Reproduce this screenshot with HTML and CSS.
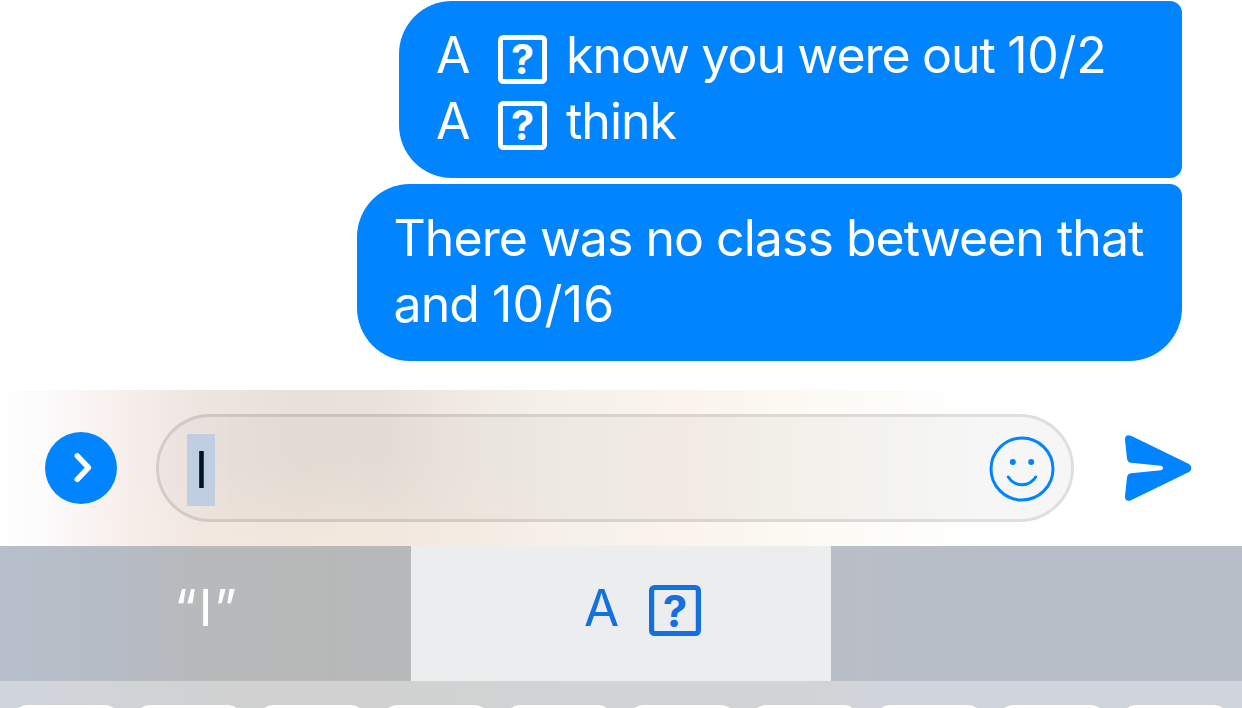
FILE: index.html
```
<!DOCTYPE html>
<html lang="en">
<head>
  <meta charset="UTF-8">
  <title>Messages</title>
  <link rel="stylesheet" href="styles.css">
</head>
<body>
  <div class="chat">
    <div class="bubble bubble-first">
      <div class="line">
        <span class="letter">A</span>
        <svg class="missing" viewBox="0 0 52 52">
          <rect x="2.6" y="2.6" width="46.8" height="46.8" rx="3" fill="none" stroke="currentColor" stroke-width="5.2"/>
          <text x="26" y="41.5" text-anchor="middle" class="missing-mark">?</text>
        </svg>
        <span class="know">know you were out <span class="date">10/2</span></span>
      </div>
      <div class="line">
        <span class="letter">A</span>
        <svg class="missing" viewBox="0 0 52 52">
          <rect x="2.6" y="2.6" width="46.8" height="46.8" rx="3" fill="none" stroke="currentColor" stroke-width="5.2"/>
          <text x="26" y="41.5" text-anchor="middle" class="missing-mark">?</text>
        </svg>
        <span class="know">think</span>
      </div>
    </div>
    <div class="bubble bubble-last">
      <div class="line"><span class="there">There was no class between that</span></div>
      <div class="line"><span class="there">and <span class="date-last">10/16</span></span></div>
    </div>
  </div>

  <div class="composer">
    <button class="more" aria-label="More">
      <svg width="72" height="72" viewBox="0 0 72 72">
        <path d="M32.3 23.8 L43.5 35.7 L32.3 47.3" fill="none" stroke="#fff" stroke-width="5.5" stroke-linecap="round" stroke-linejoin="round"/>
      </svg>
    </button>
    <div class="field">
      <span class="selected">I</span>
      <svg class="smiley" width="66" height="66" viewBox="0 0 66 66" fill="none" stroke="#0084ff" stroke-width="3">
        <circle cx="33" cy="33" r="31"/>
        <circle cx="23.8" cy="26" r="3" fill="#0084ff" stroke="none"/>
        <circle cx="42.2" cy="26" r="3" fill="#0084ff" stroke="none"/>
        <path d="M19.3 41 C26 51.3 40 51.3 46.7 41" stroke-linecap="round"/>
      </svg>
    </div>
    <button class="send" aria-label="Send">
      <svg width="68" height="68" viewBox="0 0 68 68">
        <path fill="#0084ff" d="M1 6 C0.6 2 3.5 0 7 1.8 L64 29.4 Q67.3 31 67.3 34 Q67.3 37 64 38.6 L7 66.2 C3.5 68 0.6 66 1 62 L3 43.6 Q3.4 39.6 7 39.2 L37 36.3 Q39 36 39 34 Q39 32 37 31.7 L7 28.8 Q3.4 28.4 3 24.4 Z"/>
      </svg>
    </button>
  </div>

  <div class="suggestions">
    <div class="suggestion"><span class="quoted">“I”</span></div>
    <div class="suggestion active">
      <span class="letter">A</span>
      <svg class="missing" viewBox="0 0 52 52" preserveAspectRatio="none">
        <rect x="2.6" y="2.6" width="46.8" height="46.8" rx="3" fill="none" stroke="currentColor" stroke-width="5.2"/>
        <text x="26" y="42.5" text-anchor="middle" class="missing-mark">?</text>
      </svg>
    </div>
    <div class="suggestion"></div>
  </div>

  <div class="keys">
    <span class="key"></span>
    <span class="key"></span>
    <span class="key"></span>
    <span class="key"></span>
    <span class="key"></span>
    <span class="key"></span>
    <span class="key"></span>
    <span class="key"></span>
    <span class="key"></span>
    <span class="key"></span>
  </div>
</body>
</html>
```

FILE: styles.css
```
* {
  box-sizing: border-box;
}
body {
  margin: 0;
  width: 1242px;
  height: 708px;
  overflow: hidden;
  background: #ffffff;
  font-family: Inter, "Liberation Sans", sans-serif;
  font-size: 50px;
  line-height: 66px;
}
button {
  padding: 0;
  border: none;
  background: none;
}
svg {
  display: block;
}
.chat {
  height: 390px;
  padding: 1px 60px 0 0;
  display: flex;
  flex-direction: column;
  align-items: flex-end;
  gap: 6px;
}
.bubble {
  height: 177px;
  padding: 21px 36px 0;
  background: #0084ff;
  color: #ffffff;
}
.bubble-first {
  width: 783px;
  padding-left: 37px;
  border-radius: 53px 12px 12px 53px;
}
.bubble-last {
  width: 825px;
  border-radius: 53px 12px 53px 53px;
}
.line {
  display: flex;
  height: 66px;
  white-space: nowrap;
}
.letter {
  width: 62px;
}
.know {
  letter-spacing: -1px;
  word-spacing: -0.7px;
}
.there {
  padding-left: 0.5px;
  letter-spacing: -0.95px;
  word-spacing: -0.1px;
}
.date {
  letter-spacing: -0.3px;
}
.date-last {
  letter-spacing: 0.3px;
}
.missing {
  width: 49px;
  height: 49px;
  margin-top: 13px;
  margin-right: 19px;
}
.missing-mark {
  font-size: 44px;
  font-weight: 700;
  fill: currentColor;
}
.composer {
  height: 156px;
  padding-left: 45px;
  display: flex;
  align-items: center;
  background:
    radial-gradient(ellipse 280px 90px at 330px 100%, rgba(255, 240, 226, 0.5), rgba(255, 240, 226, 0)),
    linear-gradient(90deg, #ffffff 0, #fcfafa 50px, #f6eeeb 130px, #ede5e0 200px, #e8e0d9 300px, #e9e2db 380px, #efe9e2 450px, #f5f0e9 550px, #faf4ec 690px, #fbf9f1 780px, #fcfbf7 860px, #ffffff 980px);
}
.more {
  width: 72px;
  height: 72px;
  border-radius: 50%;
  background: #0084ff;
}
.field {
  width: 918px;
  height: 108px;
  margin-left: 39px;
  padding: 0 17px 0 28px;
  display: flex;
  align-items: center;
  justify-content: space-between;
  border: 3px solid rgba(0, 0, 0, 0.13);
  border-radius: 54px;
  background: linear-gradient(90deg, rgba(0, 0, 0, 0.02), rgba(0, 0, 0, 0.035) 60%);
  background-clip: padding-box;
}
.selected {
  width: 28px;
  height: 72px;
  margin-top: 3px;
  padding-left: 1px;
  line-height: 72px;
  text-align: center;
  background: #bfcee0;
  color: #001529;
}
.smiley {
  margin-top: 2px;
  margin-right: -0.5px;
}
.send {
  margin-left: 50px;
}
.suggestions {
  height: 135px;
  display: grid;
  grid-template-columns: 411px 420px 411px;
  background: linear-gradient(90deg, #b7bfca 0, #b6bcc6 110px, #b7babc 190px, #b7b8b8 300px, #b6b9ba 410px, #b9bdc6 831px, #b7bec8 940px);
}
.suggestion {
  display: flex;
  padding-top: 29px;
  font-size: 51px;
  color: #ffffff;
}
.quoted {
  width: 100%;
  padding-left: 2px;
  text-align: center;
  letter-spacing: 2px;
}
.active {
  padding-left: 173px;
  background: #ebedef;
  color: #146fe1;
}
.active .letter {
  width: 65px;
}
.active .missing {
  width: 52px;
  height: 51px;
  margin-top: 10.2px;
}
.keys {
  height: 27px;
  padding: 24px 14px 0 13px;
  display: flex;
  justify-content: space-between;
  overflow: hidden;
  background: linear-gradient(90deg, #d0d5dd 0, #d1d4d9 90px, #d0d1d1 220px, #d0d1d0 350px, #d2d3d5 600px, #d2d3d5 800px, #d0d5dd 900px);
}
.key {
  width: 106px;
  height: 120px;
  border-radius: 14px;
  background: #ffffff;
}
```
